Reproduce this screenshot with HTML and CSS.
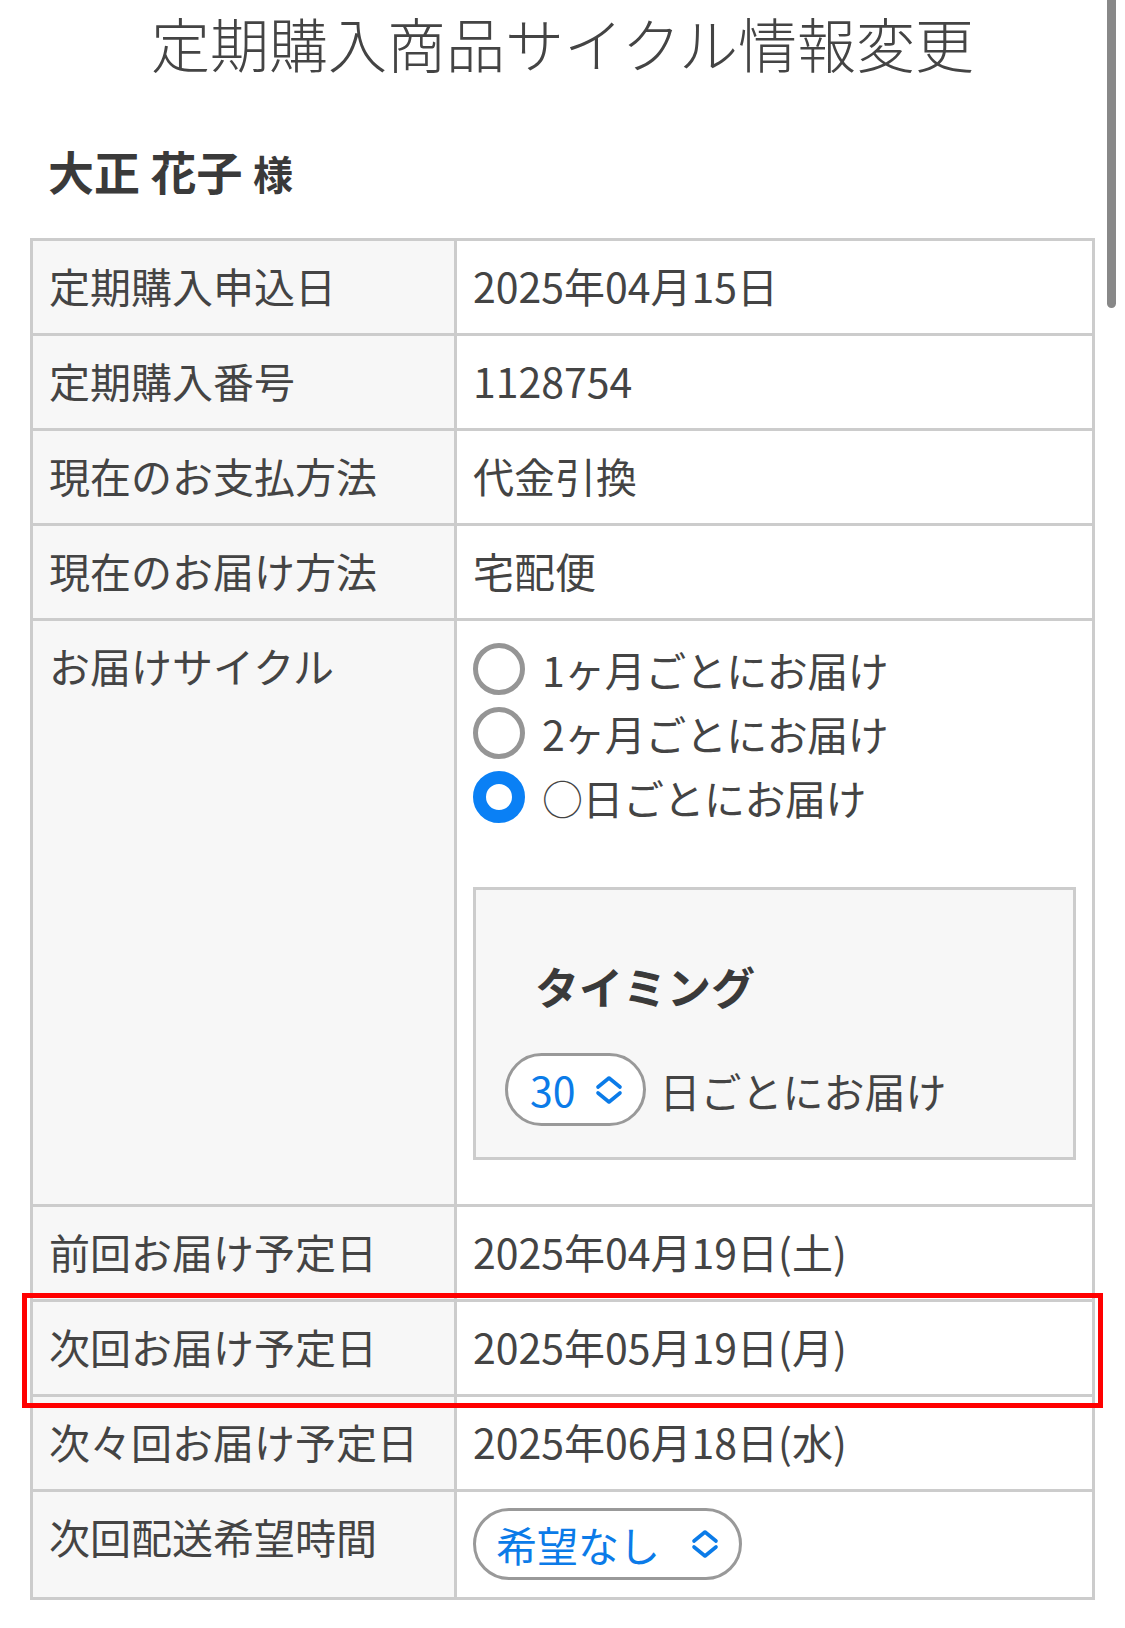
FILE: index.html
```html
<!DOCTYPE html>
<html lang="ja">
<head>
<meta charset="utf-8">
<title>定期購入商品サイクル情報変更</title>
<link rel="stylesheet" href="styles.css">
</head>
<body>
<div class="scroll-thumb"></div>
<main class="page">
  <h1 class="page-title">定期購入商品サイクル情報変更</h1>
  <p class="customer">大正 花子 <span class="honorific">様</span></p>
  <table class="info">
    <tbody>
      <tr><th>定期購入申込日</th><td>2025年04月15日</td></tr>
      <tr><th>定期購入番号</th><td>1128754</td></tr>
      <tr><th>現在のお支払方法</th><td>代金引換</td></tr>
      <tr><th>現在のお届け方法</th><td>宅配便</td></tr>
      <tr>
        <th>お届けサイクル</th>
        <td class="cycle-cell">
          <ul class="radios">
            <li class="radio-item"><span class="radio"></span><span>1ヶ月ごとにお届け</span></li>
            <li class="radio-item"><span class="radio"></span><span>2ヶ月ごとにお届け</span></li>
            <li class="radio-item"><span class="radio checked"></span><span><span class="maru">○</span>日ごとにお届け</span></li>
          </ul>
          <div class="timing">
            <h3 class="timing-title">タイミング</h3>
            <div class="timing-row">
              <span class="select select-days">30
                <svg class="chev" viewBox="0 0 30 30"><path d="M4 12 L15 3 L26 12 M4 18 L15 27 L26 18"/></svg>
              </span>
              <span>日ごとにお届け</span>
            </div>
          </div>
        </td>
      </tr>
      <tr><th>前回お届け予定日</th><td>2025年04月19日(土)</td></tr>
      <tr class="highlight-row"><th>次回お届け予定日<span class="highlight"></span></th><td>2025年05月19日(月)</td></tr>
      <tr><th>次々回お届け予定日</th><td>2025年06月18日(水)</td></tr>
      <tr class="select-row">
        <th>次回配送希望時間</th>
        <td>
          <span class="select select-time">希望なし
            <svg class="chev" viewBox="0 0 30 30"><path d="M4 12 L15 3 L26 12 M4 18 L15 27 L26 18"/></svg>
          </span>
        </td>
      </tr>
    </tbody>
  </table>
</main>
</body>
</html>
```

FILE: styles.css
```css
* {
  box-sizing: border-box;
}

html,
body {
  margin: 0;
  padding: 0;
  background: #fff;
}

body {
  font-family: "Noto Sans CJK JP", "Noto Sans", sans-serif;
  color: #444;
  overflow: hidden;
}

.scroll-thumb {
  position: fixed;
  top: 0;
  right: 9px;
  width: 9px;
  height: 308px;
  background: #888;
  border-radius: 0 0 5px 5px;
}

.page {
  padding: 0 30px;
}

.page-title {
  margin: 0;
  padding-top: 3px;
  font-size: 59px;
  line-height: 80px;
  font-weight: 300;
  text-align: center;
  color: #444;
}

.customer {
  margin: 56px 0 0;
  padding-left: 18px;
  font-size: 46px;
  line-height: 62px;
  font-weight: 700;
  color: #3a3a3a;
}

.honorific {
  font-size: 40px;
  line-height: 1;
}

.info {
  margin-top: 37px;
  width: 100%;
  border-collapse: separate;
  border-spacing: 0;
  table-layout: fixed;
  border-top: 3px solid #ccc;
  border-left: 3px solid #ccc;
}

.info th,
.info td {
  padding: 18px 16px 22px;
  font-size: 41px;
  line-height: 52px;
  font-weight: 400;
  text-align: left;
  vertical-align: top;
  border-right: 3px solid #ccc;
  border-bottom: 3px solid #ccc;
  color: #444;
}

.info th {
  width: 424px;
  background: #f7f7f7;
}

.info td {
  background: #fff;
}

.info td.cycle-cell {
  padding: 16px 16px 44px;
}

.radios {
  list-style: none;
  margin: 0;
  padding: 0;
}

.radio-item {
  display: flex;
  align-items: center;
  gap: 17px;
  height: 64px;
  letter-spacing: -0.5px;
}

.radio {
  flex: none;
  width: 52px;
  height: 52px;
  border-radius: 50%;
  border: 5px solid #959595;
  background: #fff;
}

.radio.checked {
  border: 13px solid #0a80f5;
}

.maru {
  font-weight: 300;
}

.timing {
  margin-top: 58px;
  border: 3px solid #ccc;
  background: #f7f7f7;
  padding: 63px 29px 31px;
}

.timing-title {
  margin: 0 0 34px;
  padding-left: 30px;
  font-size: 44px;
  line-height: 66px;
  font-weight: 700;
  color: #3a3a3a;
}

.timing-row {
  display: flex;
  align-items: center;
  gap: 14px;
}

.select {
  display: inline-flex;
  align-items: center;
  height: 73px;
  border: 3px solid #999;
  border-radius: 37px;
  background: #fff;
  color: #0b7be8;
  font-size: 41px;
  line-height: 1;
}

.select-days {
  padding: 0 19px 0 22px;
  gap: 18px;
}

.select-time {
  height: 72px;
  padding: 0 19px 0 20px;
  gap: 30px;
}

.chev {
  flex: none;
  display: block;
  width: 30px;
  height: 30px;
  fill: none;
  stroke: currentColor;
  stroke-width: 3.6;
  stroke-linecap: round;
  stroke-linejoin: round;
}

.info .select-row td {
  padding: 16px 16px 17px;
}

.highlight-row {
  position: relative;
}

.highlight {
  position: absolute;
  top: -9px;
  bottom: -11px;
  left: -11px;
  right: -8px;
  border: 5px solid #f00;
  pointer-events: none;
}
```
